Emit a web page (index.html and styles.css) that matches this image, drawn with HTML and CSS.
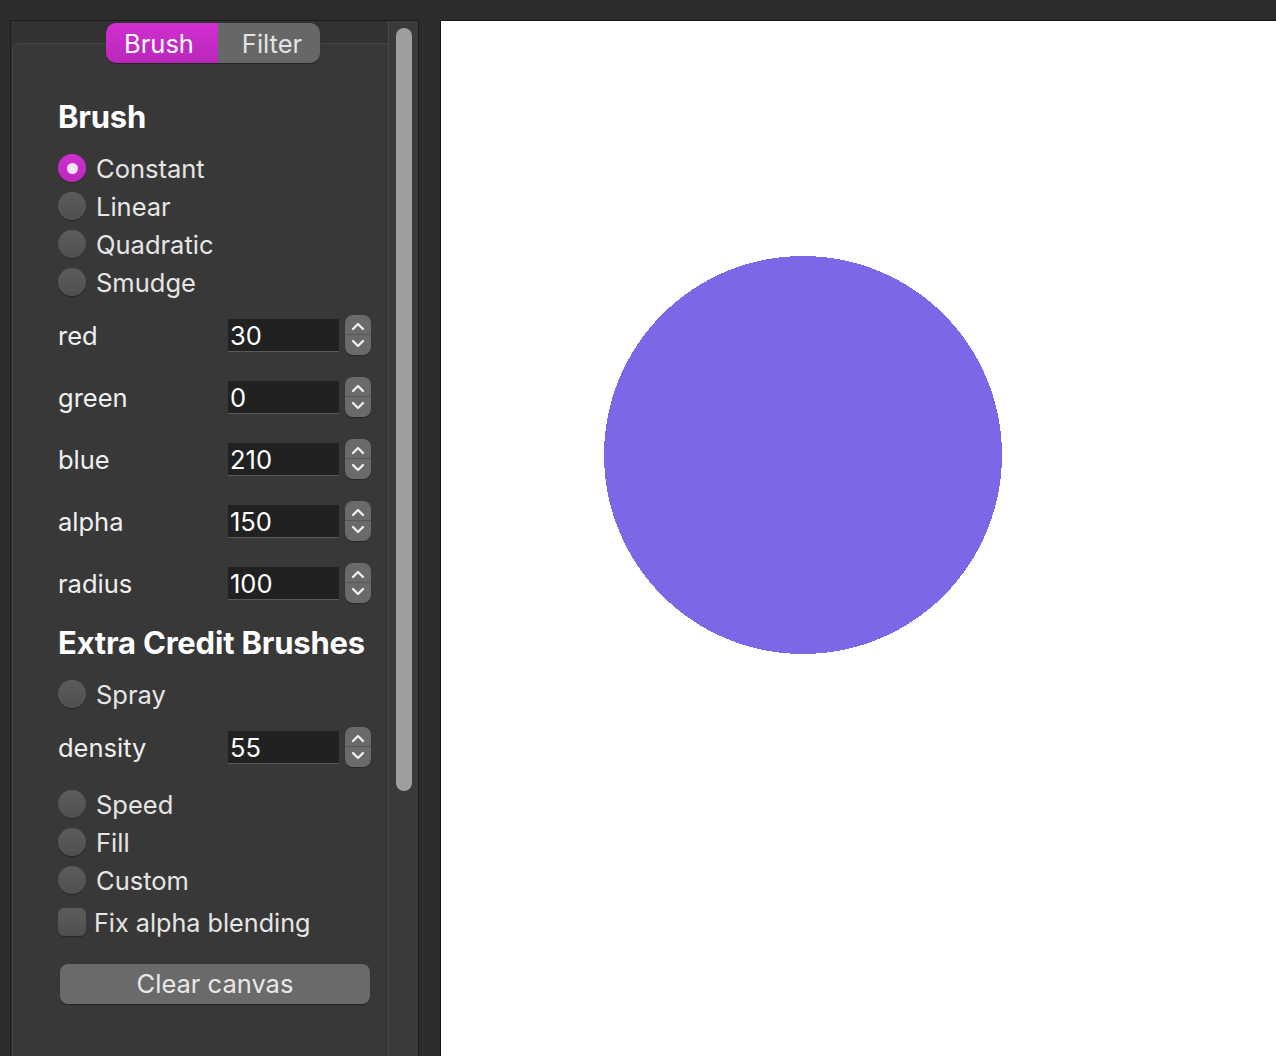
FILE: index.html
```html
<!DOCTYPE html>
<html>
<head>
<meta charset="utf-8">
<link rel="stylesheet" href="styles.css">
</head>
<body>
<div class="app">
  <div class="panel">
    <div class="content">
      <div class="tabs">
        <div class="tab active">Brush</div>
        <div class="tab">Filter</div>
      </div>
      <div class="group">
        <div class="heading">Brush</div>
        <div class="radios">
          <div class="radio-row"><span class="radio checked"></span><span class="lbl">Constant</span></div>
          <div class="radio-row"><span class="radio"></span><span class="lbl">Linear</span></div>
          <div class="radio-row"><span class="radio"></span><span class="lbl">Quadratic</span></div>
          <div class="radio-row"><span class="radio"></span><span class="lbl">Smudge</span></div>
        </div>
        <div class="spins">
          <div class="spin-row"><span class="spin-lbl">red</span><div class="field">30</div><div class="stepper"><svg width="26" height="40" viewBox="0 0 26 40"><path d="M8 14 L13 9 L18 14" /><path d="M8 26 L13 31 L18 26" /></svg></div></div>
          <div class="spin-row"><span class="spin-lbl">green</span><div class="field">0</div><div class="stepper"><svg width="26" height="40" viewBox="0 0 26 40"><path d="M8 14 L13 9 L18 14" /><path d="M8 26 L13 31 L18 26" /></svg></div></div>
          <div class="spin-row"><span class="spin-lbl">blue</span><div class="field">210</div><div class="stepper"><svg width="26" height="40" viewBox="0 0 26 40"><path d="M8 14 L13 9 L18 14" /><path d="M8 26 L13 31 L18 26" /></svg></div></div>
          <div class="spin-row"><span class="spin-lbl">alpha</span><div class="field">150</div><div class="stepper"><svg width="26" height="40" viewBox="0 0 26 40"><path d="M8 14 L13 9 L18 14" /><path d="M8 26 L13 31 L18 26" /></svg></div></div>
          <div class="spin-row"><span class="spin-lbl">radius</span><div class="field">100</div><div class="stepper"><svg width="26" height="40" viewBox="0 0 26 40"><path d="M8 14 L13 9 L18 14" /><path d="M8 26 L13 31 L18 26" /></svg></div></div>
        </div>
        <div class="heading heading2">Extra Credit Brushes</div>
        <div class="radio-row spray"><span class="radio"></span><span class="lbl">Spray</span></div>
        <div class="spin-row density"><span class="spin-lbl">density</span><div class="field">55</div><div class="stepper"><svg width="26" height="40" viewBox="0 0 26 40"><path d="M8 14 L13 9 L18 14" /><path d="M8 26 L13 31 L18 26" /></svg></div></div>
        <div class="radios extra">
          <div class="radio-row"><span class="radio"></span><span class="lbl">Speed</span></div>
          <div class="radio-row"><span class="radio"></span><span class="lbl">Fill</span></div>
          <div class="radio-row"><span class="radio"></span><span class="lbl">Custom</span></div>
        </div>
        <div class="check-row"><span class="checkbox"></span><span class="lbl">Fix alpha blending</span></div>
        <div class="button">Clear canvas</div>
      </div>
    </div>
    <div class="scrollbar"><div class="thumb"></div></div>
  </div>
  <div class="canvas">
    <svg class="dot" width="400" height="400" viewBox="0 0 400 400" shape-rendering="crispEdges"><circle cx="200" cy="200" r="199" fill="#7b68e6"/></svg>
  </div>
</div>
</body>
</html>
```
FILE: styles.css
```css
html, body {
  margin: 0;
  padding: 0;
  height: 100%;
  overflow: hidden;
}
body {
  background: #2c2c2c;
  font-family: Inter, "Noto Sans", "Liberation Sans", sans-serif;
  color: #e6e6e6;
}
.app {
  display: flex;
  height: 100%;
  padding: 20px 0 0 10px;
  box-sizing: border-box;
  gap: 21px;
}
.panel {
  width: 409px;
  flex: none;
  box-sizing: border-box;
  border: 1px solid #1b1b1b;
  border-bottom: none;
  background: #323232;
  display: flex;
  overflow: hidden;
}
.content {
  position: relative;
  width: 377px;
  flex: none;
}
.tabs {
  position: absolute;
  left: 95px;
  top: 2px;
  display: flex;
  height: 40px;
  border-radius: 10px;
  overflow: hidden;
  box-shadow: 0 1px 1px rgba(0,0,0,0.35);
  z-index: 2;
}
.tab {
  display: flex;
  align-items: center;
  justify-content: center;
  font-size: 25.5px;
  background: #676767;
  color: #e4e4e4;
  width: 102px;
  padding-top: 1px;
  padding-left: 6px;
  box-sizing: border-box;
}
.tab.active {
  width: 112px;
  background: linear-gradient(#d22fd2, #b827b9);
  color: #ffffff;
  padding-left: 0;
  padding-right: 6px;
}
.group {
  margin: 22px 0 0 1px;
  height: 1200px;
  background: #383838;
  border: 1px solid #444444;
  border-right: none;
  border-radius: 7px 0 0 0;
  box-sizing: border-box;
  padding: 54px 0 0 45px;
  display: flex;
  flex-direction: column;
}
.heading {
  font-size: 31px;
  font-weight: 700;
  color: #ffffff;
  height: 38px;
  line-height: 38px;
  letter-spacing: -0.2px;
}
.radios {
  margin-top: 13px;
  display: flex;
  flex-direction: column;
}
.radio-row {
  height: 38px;
  display: flex;
  align-items: center;
}
.radio {
  width: 28px;
  height: 28px;
  border-radius: 50%;
  background: linear-gradient(#5c5c5c, #4f4f4f);
  box-shadow: 0 1px 1px rgba(0,0,0,0.3);
  box-sizing: border-box;
  margin-right: 10px;
  flex: none;
  display: flex;
  align-items: center;
  justify-content: center;
}
.radio.checked {
  background: linear-gradient(#d030d3, #b928ba);
}
.radio.checked::after {
  content: "";
  width: 11px;
  height: 11px;
  border-radius: 50%;
  background: #f6e4f7;
}
.lbl {
  font-size: 25.5px;
  color: #e6e6e6;
  padding-top: 1px;
}
.check-row .lbl {
  font-size: 25.2px;
}
.spins {
  margin-top: 3px;
  display: flex;
  flex-direction: column;
}
.spin-row {
  height: 62px;
  display: flex;
  align-items: center;
}
.spin-lbl {
  width: 170px;
  font-size: 25.5px;
  color: #f0f0f0;
  padding-top: 1px;
}
.field {
  width: 111px;
  height: 33px;
  box-sizing: border-box;
  background: #212121;
  border-bottom: 1px solid #5a5a5a;
  font-size: 25.5px;
  color: #ffffff;
  line-height: 34px;
  padding-left: 2px;
}
.stepper {
  margin-left: 6px;
  width: 26px;
  height: 40px;
  border-radius: 8px;
  background: #6a6a6a;
  position: relative;
  box-shadow: 0 1px 1px rgba(0,0,0,0.3);
}
.stepper::before {
  content: "";
  position: absolute;
  left: 0;
  right: 0;
  top: 19px;
  height: 1px;
  background: #555555;
}
.stepper svg {
  display: block;
  position: relative;
}
.stepper path {
  fill: none;
  stroke: #eeeeee;
  stroke-width: 2.4;
  stroke-linecap: round;
  stroke-linejoin: round;
}
.heading2 {
  margin-top: 10px;
  font-size: 31px;
}
.spray {
  margin-top: 13px;
}
.density {
  margin-top: 3px;
}
.radios.extra {
  margin-top: 7px;
}
.check-row {
  margin-top: 4px;
  height: 38px;
  display: flex;
  align-items: center;
}
.checkbox {
  width: 28px;
  height: 28px;
  border-radius: 6px;
  background: linear-gradient(#5c5c5c, #4f4f4f);
  box-shadow: 0 1px 1px rgba(0,0,0,0.3);
  margin-right: 8px;
  flex: none;
}
.button {
  margin-top: 23px;
  margin-left: 2px;
  width: 310px;
  height: 40px;
  border-radius: 8px;
  background: #6a6a6a;
  box-shadow: 0 1px 1px rgba(0,0,0,0.35);
  display: flex;
  align-items: center;
  justify-content: center;
  font-size: 25.5px;
  color: #e8e8e8;
  padding-bottom: 2px;
  box-sizing: border-box;
}
.scrollbar {
  flex: 1;
  background: #3a3a3a;
  border-left: 1px solid #474747;
  padding: 7px 0 0 7px;
  box-sizing: border-box;
}
.thumb {
  width: 16px;
  height: 763px;
  border-radius: 8px;
  background: #9e9e9e;
}
.canvas {
  flex: 1;
  position: relative;
  background: #ffffff;
  border-left: 1px solid #141414;
  border-top: 1px solid #141414;
}
.dot {
  position: absolute;
  left: 162px;
  top: 234px;
}
```
